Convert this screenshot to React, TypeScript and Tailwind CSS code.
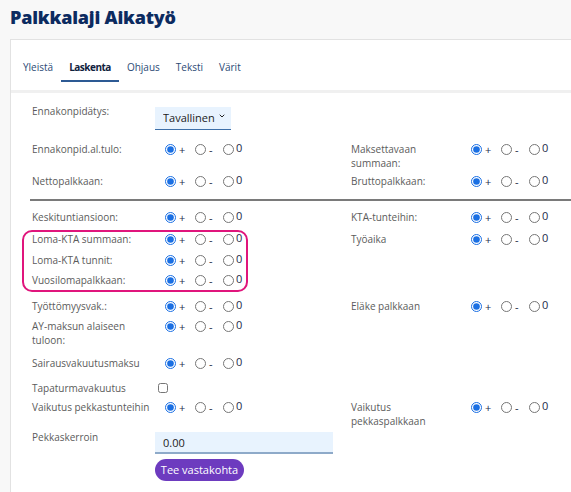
import React from "react";
import { ChevronDown } from "lucide-react";

const font = { fontFamily: '"Open Sans", "Noto Sans", sans-serif' };

const Radios = ({ name }: { name: string }) => (
  <div className="flex items-center h-[14px] pl-[10px] text-[11px] text-[#1c2b4a]">
    <label className="flex items-center gap-[3px] w-[30px]">
      <input type="radio" name={name} defaultChecked className="m-0 w-[11px] h-[11px] accent-[#1a6fe3]" />
      <span className="leading-none">+</span>
    </label>
    <label className="flex items-center gap-[3px] w-[28px]">
      <input type="radio" name={name} className="m-0 w-[11px] h-[11px] accent-[#1a6fe3]" />
      <span className="leading-none">-</span>
    </label>
    <label className="flex items-center gap-[2px]">
      <input type="radio" name={name} className="m-0 w-[11px] h-[11px] accent-[#1a6fe3]" />
      <span className="leading-none font-medium -mt-[3px]">0</span>
    </label>
  </div>
);

const Left = ({ label, children }: { label: string; children?: React.ReactNode }) => (
  <div className="flex items-start w-[319px] shrink-0">
    <div className="w-[123px] shrink-0 text-[10px] leading-[14px] text-[#5b5b5b]">{label}</div>
    {children}
  </div>
);

const Right = ({ label, name }: { label: string; name: string }) => (
  <div className="flex items-start">
    <div className="w-[110px] shrink-0 text-[10px] leading-[14px] text-[#5b5b5b]">{label}</div>
    <Radios name={name} />
  </div>
);

const tabs = ["Yleistä", "Laskenta", "Ohjaus", "Teksti", "Värit"];

export default function App() {
  return (
    <div className="min-h-screen bg-[#f8f8f8] pt-[5px] pl-[10px] overflow-hidden" style={font}>
      <h1 className="text-[18px] leading-[24px] font-extrabold text-[#0c2b60] tracking-[-0.2px]">Palkkalaji Aikatyö</h1>
      <div className="mt-[10px] bg-white border border-[#e2e2e2] w-[700px] pb-[20px]">
        <div className="flex pl-[4px]">
          {tabs.map((t) => (
            <div
              key={t}
              className={
                "px-[8px] pt-[20px] pb-[6px] border-b-2 text-[10px] leading-[14px] " +
                (t === "Laskenta"
                  ? "border-[#2d5a94] font-bold tracking-[-0.5px] text-[#10213d]"
                  : "border-transparent text-[#2c4a75]")
              }
            >
              {t}
            </div>
          ))}
        </div>
        <div className="mt-[8px] h-[3px] bg-[#f0f0f0]" />

        <div className="pl-[21px]">
          <div className="flex mt-[11px]">
            <Left label="Ennakonpidätys:">
              <div className="relative">
                <select className="appearance-none w-[76px] h-[23px] bg-[#e8f3fe] border-b border-[#3d6fa8] pl-[8px] text-[11px] text-[#222] outline-none">
                  <option>Tavallinen</option>
                </select>
                <ChevronDown className="absolute right-[5px] top-[8px] w-[8px] h-[8px] text-[#222] pointer-events-none" strokeWidth={3} />
              </div>
            </Left>
          </div>

          <div className="flex mt-[12px]">
            <Left label="Ennakonpid.al.tulo:">
              <Radios name="r1" />
            </Left>
            <Right label="Maksettavaan summaan:" name="r1b" />
          </div>

          <div className="flex mt-[4px]">
            <Left label="Nettopalkkaan:">
              <Radios name="r2" />
            </Left>
            <Right label="Bruttopalkkaan:" name="r2b" />
          </div>

          <div className="mt-[11px] -ml-[2px] h-[2px] bg-[#7a7a7a]" />

          <div className="flex mt-[9px]">
            <Left label="Keskituntiansioon:">
              <Radios name="r3" />
            </Left>
            <Right label="KTA-tunteihin:" name="r3b" />
          </div>

          <div className="flex mt-[6px]">
            <div className="w-[319px] shrink-0">
              <div className="-ml-[10px] w-[226px] border-2 border-[#e0157c] rounded-[10px] pl-[8px] pb-[3px]">
                <div className="flex items-start">
                  <div className="w-[123px] shrink-0 text-[10px] leading-[14px] text-[#5b5b5b]">Loma-KTA summaan:</div>
                  <Radios name="r4" />
                </div>
                <div className="flex items-start mt-[7px]">
                  <div className="w-[123px] shrink-0 text-[10px] leading-[14px] text-[#5b5b5b]">Loma-KTA tunnit:</div>
                  <Radios name="r5" />
                </div>
                <div className="flex items-start mt-[6px]">
                  <div className="w-[123px] shrink-0 text-[10px] leading-[14px] text-[#5b5b5b]">Vuosilomapalkkaan:</div>
                  <Radios name="r6" />
                </div>
              </div>
            </div>
            <div className="pt-[2px]">
              <Right label="Työaika" name="r4b" />
            </div>
          </div>

          <div className="flex mt-[7px]">
            <Left label="Työttömyysvak.:">
              <Radios name="r7" />
            </Left>
            <Right label="Eläke palkkaan" name="r7b" />
          </div>

          <div className="flex mt-[6px]">
            <Left label="AY-maksun alaiseen tuloon:">
              <Radios name="r8" />
            </Left>
          </div>

          <div className="flex mt-[9px]">
            <Left label="Sairausvakuutusmaksu">
              <Radios name="r9" />
            </Left>
          </div>

          <div className="flex mt-[11px]">
            <Left label="Tapaturmavakuutus">
              <input type="checkbox" className="ml-[3px] mt-[2px] w-[10px] h-[10px] m-0" />
            </Left>
          </div>

          <div className="flex mt-[5px]">
            <Left label="Vaikutus pekkastunteihin">
              <Radios name="r10" />
            </Left>
            <Right label="Vaikutus pekkaspalkkaan" name="r10b" />
          </div>

          <div className="flex mt-[2px]">
            <Left label="Pekkaskerroin">
              <input
                defaultValue="0.00"
                className="mt-[2px] w-[178px] h-[22px] bg-[#e8f3fe] border-b-2 border-[#8eaac9] pl-[8px] text-[11px] text-[#222] outline-none"
              />
            </Left>
          </div>

          <div className="flex mt-[5px]">
            <div className="w-[123px] shrink-0" />
            <button className="w-[89px] h-[22px] rounded-full bg-[#6d3bbf] text-white text-[11px]">Tee vastakohta</button>
          </div>
        </div>
      </div>
    </div>
  );
}
